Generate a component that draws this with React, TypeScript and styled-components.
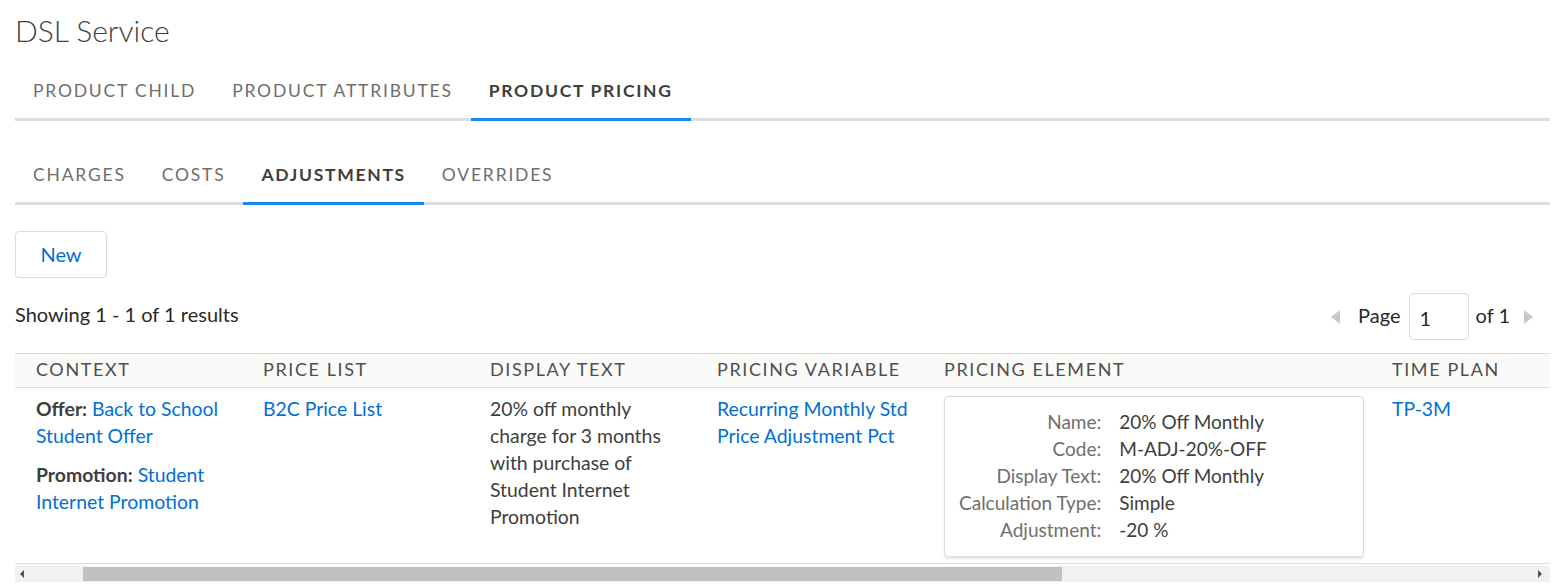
import React from "react";
import styled, { createGlobalStyle } from "styled-components";

const Global = createGlobalStyle`
  html, body { margin: 0; padding: 0; background: #fff; }
  body { font-family: Lato, "Open Sans", sans-serif; color: #3e3e3c; }
  * { box-sizing: border-box; }
`;

const Page = styled.div`
  padding: 14px 8px 0 15px;
  width: 1558px;
`;

const Title = styled.h1`
  margin: 0;
  font-size: 30px;
  line-height: 32px;
  font-weight: 300;
  color: #3e3e3c;
`;

const TabList = styled.div<{ $top: number }>`
  display: flex;
  margin-top: ${(p) => p.$top}px;
  border-bottom: 3px solid #d8dde6;
`;

const Tab = styled.div<{ $active?: boolean }>`
  padding: 19px 18px 17px;
  margin-bottom: -3px;
  font-size: 17.5px;
  line-height: 20px;
  letter-spacing: ${(p) => (p.$active ? "1.7px" : "1.8px")};
  text-transform: uppercase;
  color: ${(p) => (p.$active ? "#3e3e3c" : "#706e6b")};
  font-weight: ${(p) => (p.$active ? 700 : 400)};
  border-bottom: 3px solid ${(p) => (p.$active ? "#1589ee" : "transparent")};
  white-space: nowrap;
`;

const NewButton = styled.button`
  margin-top: 26px;
  display: block;
  width: 92px;
  height: 47px;
  padding-bottom: 3px;
  border: 1px solid #dddbda;
  border-radius: 4px;
  background: #fff;
  color: #0070d2;
  font-family: inherit;
  font-size: 20px;
`;

const ResultsBar = styled.div`
  margin-top: 15px;
  display: flex;
  justify-content: space-between;
  align-items: center;
  height: 47px;
  padding-right: 17px;
`;

const Results = styled.div`
  font-size: 20px;
  color: #2b2826;
  padding-bottom: 5px;
`;

const Pager = styled.div`
  display: flex;
  align-items: center;
  font-size: 20px;
  color: #2b2826;
`;

const PagerText = styled.span`
  padding-bottom: 4px;
`;

const Arrow = styled.span<{ $dir: "left" | "right" }>`
  width: 0;
  height: 0;
  border-top: 7px solid transparent;
  border-bottom: 7px solid transparent;
  ${(p) =>
    p.$dir === "left"
      ? "border-right: 9px solid #c9c7c5; margin-right: 18px;"
      : "border-left: 9px solid #c9c7c5; margin-left: 14px;"}
`;

const PageInput = styled.div`
  width: 60px;
  height: 47px;
  margin: 0 7px 0 8px;
  border: 1px solid #dddbda;
  border-radius: 4px;
  padding: 2px 0 0 10px;
  display: flex;
  align-items: center;
  font-size: 20px;
`;

const TableWrap = styled.div`
  margin-top: 13px;
`;

const Table = styled.table`
  width: 1535px;
  border-collapse: collapse;
  table-layout: fixed;
`;

const HeadRow = styled.tr`
  background: #fafaf9;
  border-top: 1px solid #dddbda;
  border-bottom: 1px solid #dddbda;
`;

const Th = styled.th<{ $w: number }>`
  width: ${(p) => p.$w}px;
  height: 34px;
  padding: 0 0 3px 21px;
  text-align: left;
  font-weight: 400;
  font-size: 18px;
  letter-spacing: 1.6px;
  color: #514f4d;
  white-space: nowrap;
`;

const BodyRow = styled.tr`
  border-bottom: 1px solid #dddbda;
`;

const Td = styled.td`
  vertical-align: top;
  padding: 7px 10px 6px 21px;
  font-size: 19.4px;
  line-height: 27px;
  color: #3e3e3c;
`;

const Para = styled.div`
  & + & {
    margin-top: 12px;
  }
`;

const Strong = styled.span`
  font-weight: 700;
`;

const Link = styled.a`
  color: #0070d2;
  text-decoration: none;
`;

const Card = styled.div`
  margin-top: 1px;
  width: 420px;
  border: 1px solid #dddbda;
  border-radius: 4px;
  box-shadow: 0 2px 2px rgba(0, 0, 0, 0.1);
  padding: 11px 14px 13px;
  display: grid;
  grid-template-columns: max-content 1fr;
  column-gap: 18px;
  font-size: 19px;
`;

const Label = styled.div`
  text-align: right;
  color: #706e6b;
`;

const Value = styled.div`
  color: #3e3e3c;
`;

const ScrollBar = styled.div`
  margin-top: 2px;
  width: 1535px;
  height: 16px;
  background: #f1f1f1;
  display: flex;
  align-items: center;
  padding: 0 8px 0 5px;
`;

const ScrollArrow = styled.span<{ $dir: "left" | "right" }>`
  width: 0;
  height: 0;
  border-top: 4px solid transparent;
  border-bottom: 4px solid transparent;
  ${(p) =>
    p.$dir === "left"
      ? "border-right: 4px solid #505050;"
      : "border-left: 4px solid #505050;"}
`;

const Thumb = styled.div`
  height: 14px;
  width: 979px;
  margin-left: 59px;
  background: #c1c1c1;
`;

const Spacer = styled.div`
  flex: 1;
`;

const cardRows: [string, string][] = [
  ["Name:", "20% Off Monthly"],
  ["Code:", "M-ADJ-20%-OFF"],
  ["Display Text:", "20% Off Monthly"],
  ["Calculation Type:", "Simple"],
  ["Adjustment:", "-20 %"],
];

export default function App() {
  return (
    <Page>
      <Global />
      <Title>DSL Service</Title>
      <TabList $top={16}>
        <Tab>Product Child</Tab>
        <Tab>Product Attributes</Tab>
        <Tab $active>Product Pricing</Tab>
      </TabList>
      <TabList $top={25}>
        <Tab>Charges</Tab>
        <Tab>Costs</Tab>
        <Tab $active>Adjustments</Tab>
        <Tab>Overrides</Tab>
      </TabList>
      <NewButton>New</NewButton>
      <ResultsBar>
        <Results>Showing 1 - 1 of 1 results</Results>
        <Pager>
          <Arrow $dir="left" />
          <PagerText>Page</PagerText>
          <PageInput>1</PageInput>
          <PagerText>of 1</PagerText>
          <Arrow $dir="right" />
        </Pager>
      </ResultsBar>
      <TableWrap>
        <Table>
          <thead>
            <HeadRow>
              <Th $w={227}>CONTEXT</Th>
              <Th $w={227}>PRICE LIST</Th>
              <Th $w={227}>DISPLAY TEXT</Th>
              <Th $w={227}>PRICING VARIABLE</Th>
              <Th $w={448}>PRICING ELEMENT</Th>
              <Th $w={179}>TIME PLAN</Th>
            </HeadRow>
          </thead>
          <tbody>
            <BodyRow>
              <Td>
                <Para>
                  <Strong>Offer:</Strong> <Link>Back to School Student Offer</Link>
                </Para>
                <Para>
                  <Strong>Promotion:</Strong> <Link>Student Internet Promotion</Link>
                </Para>
              </Td>
              <Td>
                <Link>B2C Price List</Link>
              </Td>
              <Td>20% off monthly charge for 3 months with purchase of Student Internet Promotion</Td>
              <Td>
                <Link>Recurring Monthly Std Price Adjustment Pct</Link>
              </Td>
              <Td>
                <Card>
                  {cardRows.map(([l, v]) => (
                    <React.Fragment key={l}>
                      <Label>{l}</Label>
                      <Value>{v}</Value>
                    </React.Fragment>
                  ))}
                </Card>
              </Td>
              <Td>
                <Link>TP-3M</Link>
              </Td>
            </BodyRow>
          </tbody>
        </Table>
        <ScrollBar>
          <ScrollArrow $dir="left" />
          <Thumb />
          <Spacer />
          <ScrollArrow $dir="right" />
        </ScrollBar>
      </TableWrap>
    </Page>
  );
}
